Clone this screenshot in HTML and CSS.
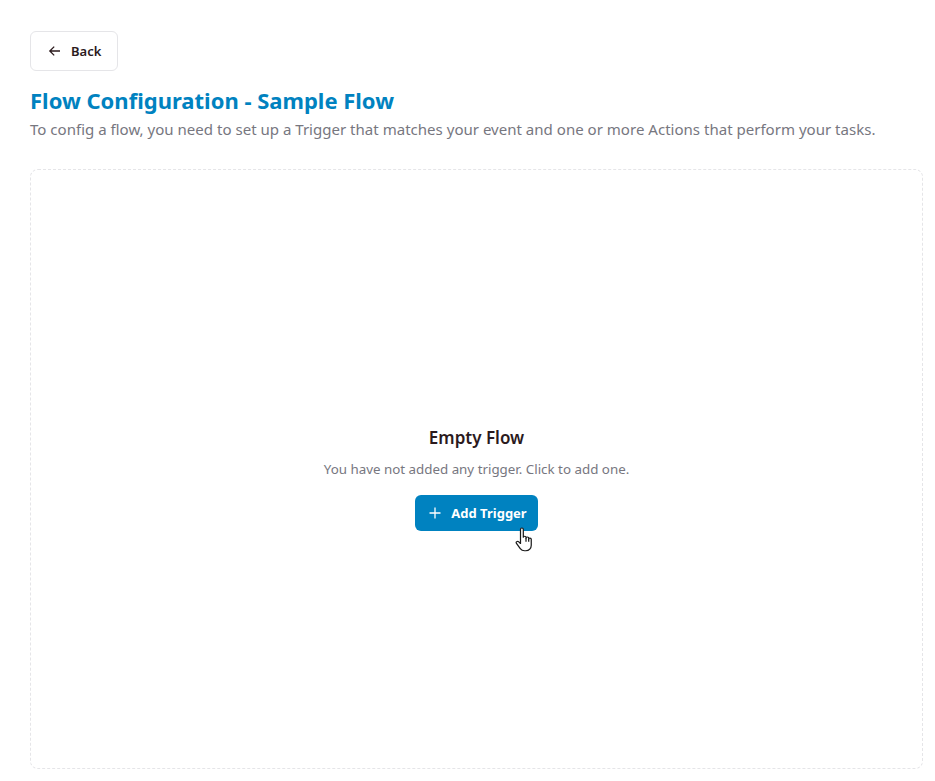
FILE: index.html
```html
<!DOCTYPE html>
<html lang="en">
<head>
    <meta charset="UTF-8">
    <meta name="viewport" content="width=device-width, initial-scale=1.0">
    <title>Flow Configuration</title>
    <link rel="stylesheet" href="styles.css">
</head>
<body>
    <div class="page">
        <button class="back-btn">
            <svg class="back-icon" width="16" height="16" viewBox="0 0 16 16" fill="none" stroke="currentColor" stroke-width="1.3"><path d="M13 8H3M7.2 3.6 2.8 8l4.4 4.4"/></svg>
            Back
        </button>
        <h1>Flow Configuration - Sample Flow</h1>
        <p class="subtitle">To config a flow, you need to set up a Trigger that matches your event and one or more Actions that perform your tasks.</p>
        <div class="flow-box">
            <h2>Empty Flow</h2>
            <p class="empty-text">You have not added any trigger. Click to add one.</p>
            <button class="add-btn">
                <svg width="14" height="14" viewBox="0 0 14 14" fill="none" stroke="currentColor" stroke-width="1.3"><path d="M7 1.500v11M1.500 7h11"/></svg>
                Add Trigger
                <!-- mouse pointer caught in the screenshot -->
                <svg class="cursor" width="22" height="27" viewBox="0 0 18 25" preserveAspectRatio="none" fill="#fff" stroke="#1a1a1a" stroke-width="1" stroke-linejoin="round"><path d="M4.500 2.200c0-1.600 2.300-1.600 2.300 0v7.300c0-1.300 2.200-1.300 2.200 0v.8c0-1.300 2.200-1.300 2.200 0v.9c0-1.200 2.100-1.200 2.100.1v5.600c0 2.700-1.700 5.100-4.500 5.100H7.800c-1.700 0-2.700-.8-3.500-2L1.200 15.200c-.8-1.300.8-2.500 1.900-1.400l1.400 1.500z"/><path d="M9 10.300v3.400M11.200 11.200v2.500" fill="none"/></svg>
            </button>
        </div>
    </div>
</body>
</html>
```

FILE: styles.css
```css
body {
    margin: 0;
    font-family: "Noto Sans", sans-serif;
    background: #fff;
    color: #2b1a1d;
}
.page {
    padding: 31px 12px 12px 30px;
}
button {
    font-family: inherit;
    cursor: pointer;
}
.back-btn {
    display: flex;
    align-items: center;
    gap: 8px;
    height: 40px;
    width: 88px;
    padding: 0 0 0 16px;
    background: #fff;
    border: 1px solid #e5e5e8;
    border-radius: 6px;
    color: #2b1a1d;
    font-size: 13px;
    font-weight: 600;
}
h1 {
    margin: 15px 0 0;
    color: #0082c0;
    font-size: 22px;
    line-height: 28px;
    font-weight: 700;
}
.subtitle {
    margin: 4px 0 29px;
    color: #77777f;
    font-size: 15.050px;
    line-height: 22px;
}
.flow-box {
    display: flex;
    flex-direction: column;
    align-items: center;
    justify-content: center;
    box-sizing: border-box;
    height: 600px;
    padding-top: 19px;
    border: 1px dashed #e5e5e8;
    border-radius: 8px;
}
.flow-box h2 {
    margin: 0;
    font-size: 17px;
    line-height: 24px;
    font-weight: 600;
}
.empty-text {
    margin: 9px 0 16px;
    color: #77777f;
    font-size: 13.350px;
    line-height: 20px;
}
.add-btn {
    position: relative;
    display: flex;
    align-items: center;
    gap: 9px;
    height: 36px;
    padding: 0 11px 0 13px;
    background: #0082c0;
    border: none;
    border-radius: 6px;
    color: #fff;
    font-size: 13px;
    font-weight: 700;
}
.cursor {
    position: absolute;
    left: 100px;
    top: 32px;
}
```
